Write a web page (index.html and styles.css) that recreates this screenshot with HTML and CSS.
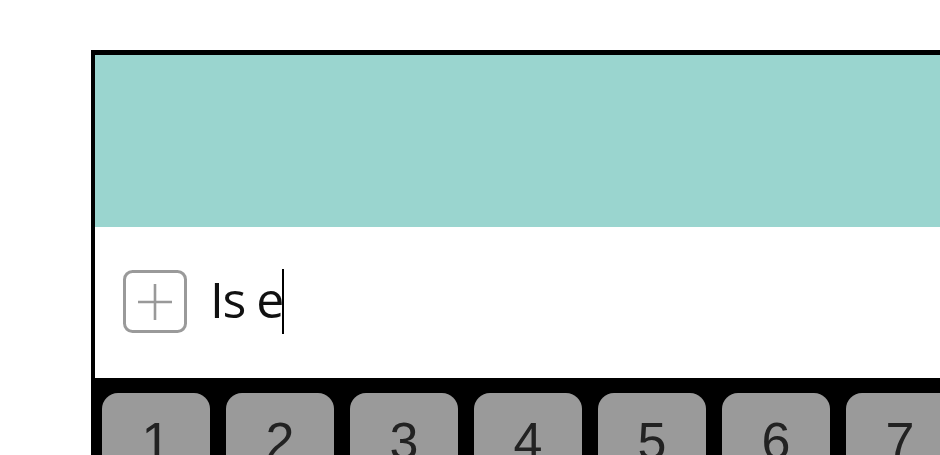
FILE: index.html
```html
<!DOCTYPE html>
<html lang="en">
<head>
<meta charset="utf-8">
<title>Compose</title>
<link rel="stylesheet" href="styles.css">
</head>
<body>
<div class="device">
  <header class="appbar"></header>
  <div class="composer">
    <span class="add-btn">
      <svg width="64" height="63" viewBox="0 0 64 63" aria-hidden="true">
        <rect x="1.5" y="1.5" width="61" height="60" rx="8" ry="8" fill="none" stroke="#9a9a9a" stroke-width="3"/>
        <path d="M15 32H49M32 14V50" stroke="#999" stroke-width="2.6" fill="none"/>
      </svg>
    </span>
    <span class="field">Is e<span class="caret"></span></span>
  </div>
  <div class="keyboard">
    <span class="key">1</span>
    <span class="key">2</span>
    <span class="key">3</span>
    <span class="key">4</span>
    <span class="key">5</span>
    <span class="key">6</span>
    <span class="key">7</span>
    <span class="key">8</span>
  </div>
</div>
</body>
</html>
```

FILE: styles.css
```css
html, body {
  margin: 0;
  background: #ffffff;
  overflow: hidden;
}

.device {
  margin: 50px 0 0 91px;
  width: 900px;
  border: 4px solid #000;
  border-top-width: 5px;
  border-right: none;
  background: #fff;
}

.appbar {
  height: 172px;
  background: #9ad5cf;
}

.composer {
  height: 151px;
  display: flex;
  align-items: center;
  padding-left: 28px;
  gap: 23px;
  background: #fff;
}

.add-btn {
  display: flex;
  width: 64px;
  height: 63px;
  margin-top: -2px;
}

.field {
  font-family: "Open Sans", "Noto Sans", sans-serif;
  font-size: 50px;
  letter-spacing: -1.5px;
  color: #111;
  line-height: 1;
  display: flex;
  align-items: center;
  margin-top: -8px;
}

.caret {
  display: inline-block;
  width: 2px;
  height: 65px;
  background: #000;
  margin-left: -1px;
  margin-top: 6px;
}

.keyboard {
  background: #000;
  padding: 15px 0 0 7px;
  height: 200px;
  display: flex;
  gap: 16px;
}

.key {
  flex: 0 0 108px;
  height: 120px;
  background: #9a9a9a;
  border-radius: 16px;
  display: flex;
  justify-content: center;
  padding-top: 22px;
  box-sizing: border-box;
  font-family: "Liberation Sans", Arial, sans-serif;
  font-size: 52px;
  line-height: 1;
  color: #222;
}
```
